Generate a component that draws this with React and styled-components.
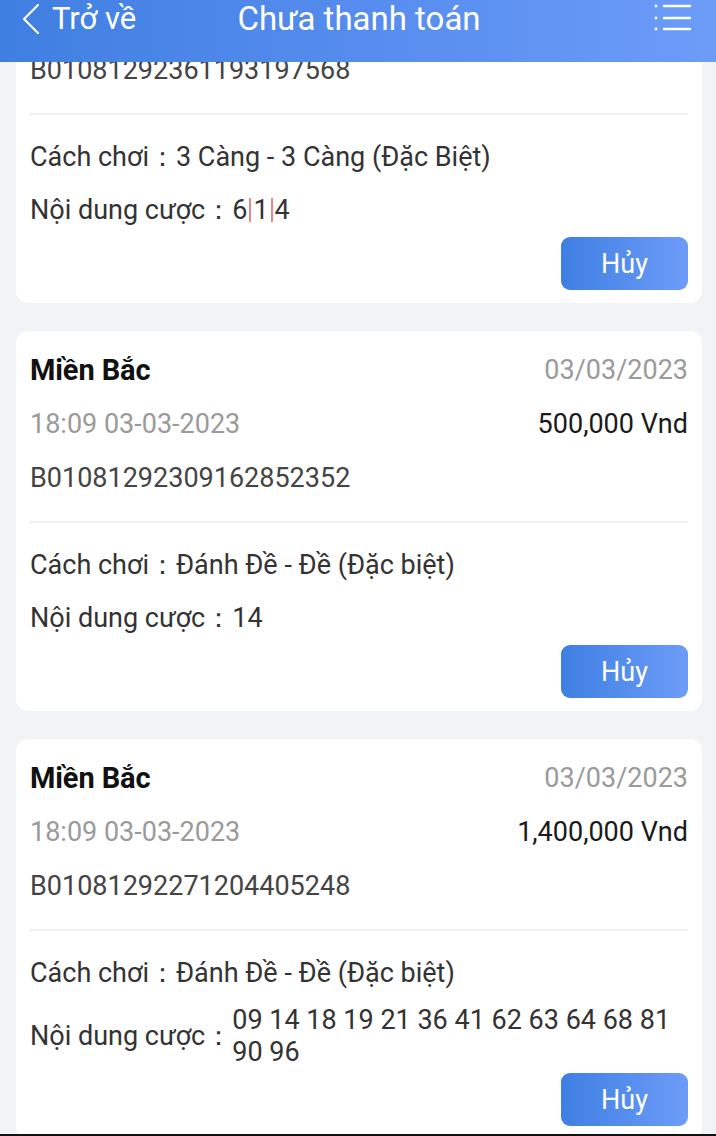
import React, { useLayoutEffect, useRef } from "react";
import styled, { createGlobalStyle } from "styled-components";

const orders = [
	{
		id: "B01081292361193197568",
		region: "Miền Bắc",
		date: "03/03/2023",
		time: "18:09 03-03-2023",
		amount: "300,000 Vnd",
		play: "3 Càng - 3 Càng (Đặc Biệt)",
		numbers: ["6", "1", "4"],
	},
	{
		id: "B01081292309162852352",
		region: "Miền Bắc",
		date: "03/03/2023",
		time: "18:09 03-03-2023",
		amount: "500,000 Vnd",
		play: "Đánh Đề - Đề (Đặc biệt)",
		numbers: ["14"],
	},
	{
		id: "B01081292271204405248",
		region: "Miền Bắc",
		date: "03/03/2023",
		time: "18:09 03-03-2023",
		amount: "1,400,000 Vnd",
		play: "Đánh Đề - Đề (Đặc biệt)",
		numbers: ["09 14 18 19 21 36 41 62 63 64 68 81 90 96"],
	},
];

export default function App() {
	const listRef = useRef(null);

	// the list is scrolled a bit, the first card sits under the header
	useLayoutEffect(() => {
		if (listRef.current) listRef.current.scrollTop = 155;
	}, []);

	return (
		<>
			<GlobalStyle />
			<Screen>
				<Header>
					<BackButton>
						<svg width="22" height="32" viewBox="0 0 22 32" fill="none">
							<path
								d="M18 2 L4 16 L18 30"
								stroke="#fff"
								strokeWidth="2.2"
								strokeLinecap="round"
								strokeLinejoin="round"
							/>
						</svg>
						<span>Trở về</span>
					</BackButton>
					<Title>Chưa thanh toán</Title>
					<MenuButton>
						<svg width="40" height="30" viewBox="0 0 40 30" fill="none">
							<circle cx="4" cy="4" r="1.4" fill="#fff" />
							<circle cx="4" cy="16" r="1.4" fill="#fff" />
							<circle cx="4" cy="27" r="1.4" fill="#fff" />
							<path
								d="M12 4 H38 M12 16 H38 M12 27 H38"
								stroke="#fff"
								strokeWidth="2.4"
								strokeLinecap="round"
							/>
						</svg>
					</MenuButton>
				</Header>
				<List ref={listRef}>
					{orders.map((order, i) => (
						<Card key={i}>
							<Row>
								<Region>{order.region}</Region>
								<Muted>{order.date}</Muted>
							</Row>
							<Row>
								<Muted>{order.time}</Muted>
								<Amount>{order.amount}</Amount>
							</Row>
							<OrderId>{order.id}</OrderId>
							<Divider />
							<Detail>
								<Label>Cách chơi：</Label>
								<Value>{order.play}</Value>
							</Detail>
							<Detail>
								<Label>Nội dung cược：</Label>
								<Value>
									{order.numbers.map((n, j) => (
										<React.Fragment key={j}>
											{j > 0 && <Pipe />}
											{n}
										</React.Fragment>
									))}
								</Value>
							</Detail>
							<Actions>
								<CancelButton>Hủy</CancelButton>
							</Actions>
						</Card>
					))}
				</List>
				<BottomEdge />
			</Screen>
		</>
	);
}

const GlobalStyle = createGlobalStyle`
	html, body {
		margin: 0;
		padding: 0;
		background: #f2f3f5;
		font-family: Roboto, "Noto Sans", sans-serif;
	}
	* {
		box-sizing: border-box;
	}
`;

const Screen = styled.div`
	display: flex;
	flex-direction: column;
	height: 1136px;
	overflow: hidden;
	background: #f2f3f5;
`;

const Header = styled.div`
	flex: 0 0 62px;
	display: grid;
	grid-template-columns: 1fr auto 1fr;
	align-items: start;
	padding: 1px 24px 0 20px;
	background: linear-gradient(90deg, #3f7fe1 0%, #5a8ff0 60%, #6c9cf8 100%);
	color: #fff;
	z-index: 2;
`;

const BackButton = styled.div`
	display: flex;
	align-items: center;
	gap: 10px;
	font-size: 31px;
	line-height: 36px;
	justify-self: start;
	white-space: nowrap;
`;

const Title = styled.div`
	line-height: 36px;
	font-size: 33px;
	white-space: nowrap;
	padding-left: 6px;
`;

const MenuButton = styled.div`
	justify-self: end;
	padding-top: 1px;
	display: flex;
`;

const List = styled.div`
	flex: 1;
	overflow-y: auto;
	padding: 16px 14px 16px 16px;
	display: flex;
	flex-direction: column;
	gap: 28px;
	scrollbar-width: none;
	&::-webkit-scrollbar {
		display: none;
	}
`;

const Card = styled.div`
	flex-shrink: 0;
	background: #fff;
	border-radius: 12px;
	padding: 23px 14px 13px;
	display: flex;
	flex-direction: column;
`;

const Row = styled.div`
	display: flex;
	justify-content: space-between;
	align-items: center;
	height: 32px;
	margin-bottom: 22px;
`;

const Region = styled.div`
	font-size: 29px;
	font-weight: 700;
	color: #111;
	letter-spacing: -0.1px;
`;

const Muted = styled.div`
	font-size: 27px;
	color: #9a9a9a;
`;

const Amount = styled.div`
	font-size: 27px;
	color: #1a1a1a;
`;

const OrderId = styled.div`
	font-size: 27px;
	line-height: 32px;
	color: #444;
`;

const Divider = styled.div`
	height: 2px;
	background: #eeeff1;
	margin: 27px 0 20px;
`;

const Detail = styled.div`
	display: flex;
	align-items: center;
	min-height: 44px;
	font-size: 27px;
	line-height: 32px;
	color: #333;
	& + & {
		margin-top: 9px;
	}
`;

const Label = styled.span`
	flex-shrink: 0;
	white-space: nowrap;
`;

const Value = styled.span`
	flex: 1;
`;

const Pipe = styled.span`
	display: inline-block;
	width: 2px;
	height: 24px;
	margin: 0 2px;
	background: #e08a8a;
	vertical-align: -3px;
`;

const Actions = styled.div`
	display: flex;
	justify-content: flex-end;
	margin-top: 5px;
`;

const CancelButton = styled.button`
	width: 127px;
	height: 53px;
	border: none;
	border-radius: 9px;
	background: linear-gradient(90deg, #3e7fe2 0%, #6d9cf8 100%);
	color: #fff;
	font-family: Roboto, "Noto Sans", sans-serif;
	font-size: 27px;
	padding: 0;
`;

const BottomEdge = styled.div`
	flex: 0 0 2px;
	background: #111;
`;
